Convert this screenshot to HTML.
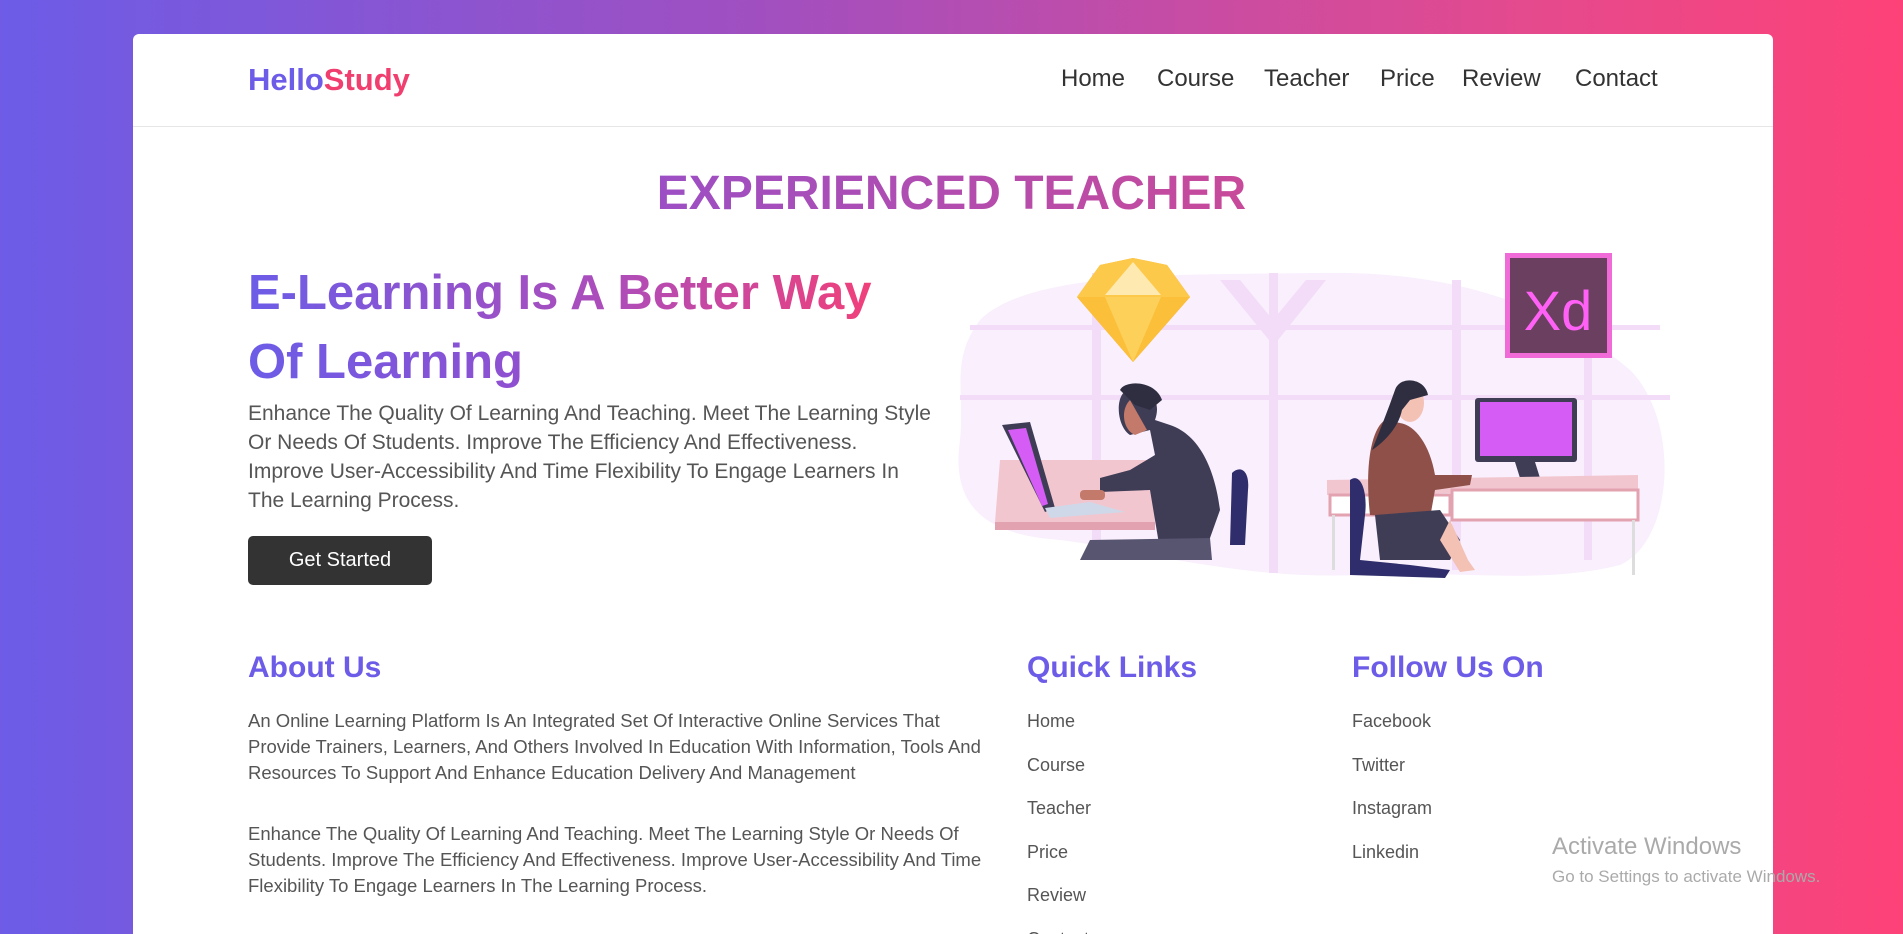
<!DOCTYPE html>
<html><head><meta charset="utf-8"><style>
*{margin:0;padding:0;box-sizing:border-box}
html,body{width:1903px;height:934px;overflow:hidden}
body{background:linear-gradient(90deg,#6c5ce7 0%,#a14fc0 40%,#e44a8e 80%,#fd4278 100%);font-family:"Liberation Sans",sans-serif;position:relative}
.card{position:absolute;left:133px;top:34px;width:1640px;height:900px;background:#fff;border-radius:6px 6px 0 0}
.a{position:absolute;white-space:nowrap}
.hdr{position:absolute;left:133px;top:126px;width:1640px;height:1px;background:#e6e6e6}
.nav{font-size:24px;color:#333;top:65px}
.p{font-size:21px;color:#555;line-height:29px}
.s{font-size:18.5px;color:#555;line-height:26px}
.h3{font-size:30px;color:#6c5ce7;font-weight:bold;top:651px}
.li{font-size:18px;color:#555}
</style></head><body>
<div class="card"></div>
<div class="hdr"></div>
<div class="a" style="left:248px;top:62px;font-size:31px;font-weight:bold"><span style="color:#6c5ce7">Hello</span><span style="color:#f03e6f">Study</span></div>
<div class="a nav" style="left:1061px">Home</div>
<div class="a nav" style="left:1157px">Course</div>
<div class="a nav" style="left:1264px">Teacher</div>
<div class="a nav" style="left:1380px">Price</div>
<div class="a nav" style="left:1462px">Review</div>
<div class="a nav" style="left:1575px">Contact</div>
<div class="a" style="left:0;width:1903px;text-align:center;top:166px;font-size:48px;font-weight:bold"><span style="background:linear-gradient(90deg,#9c4fc4,#c84a9a);-webkit-background-clip:text;background-clip:text;color:transparent">EXPERIENCED TEACHER</span></div>
<div class="a" style="left:248px;top:259px;font-size:49px;font-weight:bold;line-height:69px"><span style="background:linear-gradient(90deg,#6c5ce7 0%,#b04cb8 60%,#f0407a 100%);-webkit-background-clip:text;background-clip:text;color:transparent">E-Learning Is A Better Way</span><br><span style="background:linear-gradient(90deg,#6c5ce7,#9050d0);-webkit-background-clip:text;background-clip:text;color:transparent">Of Learning</span></div>
<div class="a p" style="left:248px;top:399px">Enhance The Quality Of Learning And Teaching. Meet The Learning Style<br>Or Needs Of Students. Improve The Efficiency And Effectiveness.<br>Improve User-Accessibility And Time Flexibility To Engage Learners In<br>The Learning Process.</div>
<div class="a" style="left:248px;top:536px;width:184px;height:49px;background:#333;border-radius:5px;color:#fff;font-size:20px;text-align:center;line-height:49px">Get Started</div>

<svg class="a" style="left:940px;top:240px" width="740" height="350" viewBox="0 0 740 350">
<path d="M40 80 C90 30 250 35 380 33 C520 30 620 70 690 130 C740 180 735 300 680 325 C600 345 520 330 420 335 C300 340 200 310 120 300 C50 295 10 270 20 200 C25 150 10 120 40 80Z" fill="#f9effd"/>
<g fill="#f3dcf7"><rect x="152" y="33" width="9" height="270"/><rect x="329" y="33" width="9" height="300"/><rect x="512" y="40" width="9" height="290"/><rect x="644" y="110" width="8" height="210"/><rect x="30" y="85" width="690" height="5"/><rect x="20" y="155" width="710" height="5"/>
<path d="M280 40 L300 40 L333 80 L366 40 L386 40 L338 100 L329 100Z"/></g>
<polygon points="137,57 160,25 193,18 227,25 250,57 193,122" fill="#f5a623"/>
<polygon points="160,25 193,18 227,25 250,57 137,57" fill="#fdc94a"/>
<polygon points="165,55 193,22 221,55" fill="#feeab0"/>
<polygon points="137,57 250,57 193,122" fill="#fbbf3a"/>
<polygon points="165,57 221,57 193,122" fill="#fdd05a"/>
<rect x="565" y="13" width="107" height="105" fill="#f06ad8"/>
<rect x="570" y="18" width="97" height="95" fill="#6b3f5f"/>
<text x="618" y="90" text-anchor="middle" font-family="Liberation Sans,sans-serif" font-size="56" fill="#ff61f6">Xd</text>
<path d="M60 220 L210 220 L215 282 L55 282Z" fill="#f2c6cf"/><rect x="55" y="282" width="160" height="8" fill="#e3a2b0"/>
<polygon points="62,185 90,182 115,268 105,272" fill="#3f3d56"/><polygon points="68,190 86,188 108,264 102,266" fill="#d55cf5"/>
<polygon points="105,268 150,262 185,272 110,278" fill="#cfd8e8"/>
<path d="M190 150 C175 150 175 185 190 195 L210 190 L215 215 L190 230 L160 238 L160 252 L210 250 L220 310 L265 312 L280 270 C275 230 260 195 230 185 L215 180 C222 160 210 148 190 150Z" fill="#3f3d56"/>
<path d="M190 160 C180 170 183 190 195 195 L207 190 Z" fill="#c47a6a"/>
<path d="M180 150 C185 140 215 140 222 160 L210 170 L195 165Z" fill="#2f2e41"/>
<rect x="140" y="250" width="25" height="10" rx="4" fill="#c47a6a"/>
<path d="M292 233 C300 225 310 230 308 250 L305 305 L290 305Z" fill="#2f2d6b"/>
<path d="M150 300 L270 298 L272 320 L140 320Z" fill="#575570"/>
<rect x="535" y="158" width="102" height="64" rx="3" fill="#3f3d56"/><rect x="540" y="162" width="92" height="54" fill="#d55cf5"/>
<polygon points="575,222 595,222 600,238 580,238" fill="#3f3d56"/>
<path d="M387 240 L698 235 L698 250 L387 255Z" fill="#f2c6cf"/>
<rect x="390" y="255" width="120" height="20" fill="#fff" stroke="#e3a2b0" stroke-width="3"/>
<rect x="512" y="250" width="186" height="30" fill="#fff" stroke="#e3a2b0" stroke-width="3"/>
<rect x="392" y="275" width="3" height="55" fill="#ddd"/><rect x="692" y="280" width="3" height="55" fill="#ddd"/>
<path d="M410 240 C420 232 428 250 425 275 L420 320 L470 325 L510 330 L505 338 L410 335Z" fill="#2f2d6b"/>
<path d="M445 180 C430 190 425 230 430 275 L490 278 L495 250 L530 245 L532 235 L495 235 C490 205 475 185 460 183Z" fill="#8e5048"/>
<path d="M435 275 L500 270 L520 300 L510 320 L440 320Z" fill="#3f3d56"/>
<path d="M510 280 L528 320 L535 330 L520 332 L500 300Z" fill="#f4c1b5"/>
<ellipse cx="470" cy="163" rx="14" ry="19" fill="#f4c1b5"/>
<path d="M455 150 C460 135 485 138 488 155 L470 160 L462 170 C458 190 440 205 432 210 C440 190 448 170 455 150Z" fill="#2f2e41"/>
</svg>

<div class="a h3" style="left:248px">About Us</div>
<div class="a h3" style="left:1027px">Quick Links</div>
<div class="a h3" style="left:1352px">Follow Us On</div>
<div class="a s" style="left:248px;top:708px">An Online Learning Platform Is An Integrated Set Of Interactive Online Services That<br>Provide Trainers, Learners, And Others Involved In Education With Information, Tools And<br>Resources To Support And Enhance Education Delivery And Management</div>
<div class="a s" style="left:248px;top:821px">Enhance The Quality Of Learning And Teaching. Meet The Learning Style Or Needs Of<br>Students. Improve The Efficiency And Effectiveness. Improve User-Accessibility And Time<br>Flexibility To Engage Learners In The Learning Process.</div>
<div class="a li" style="left:1027px;top:700px;line-height:43.5px">Home<br>Course<br>Teacher<br>Price<br>Review<br>Contact</div>
<div class="a li" style="left:1352px;top:700px;line-height:43.5px">Facebook<br>Twitter<br>Instagram<br>Linkedin</div>
<div class="a" style="left:1552px;top:833px;font-size:24px;color:#aaa">Activate Windows</div>
<div class="a" style="left:1552px;top:867px;font-size:17px;color:#aaa">Go to Settings to activate Windows.</div>
</body></html>
